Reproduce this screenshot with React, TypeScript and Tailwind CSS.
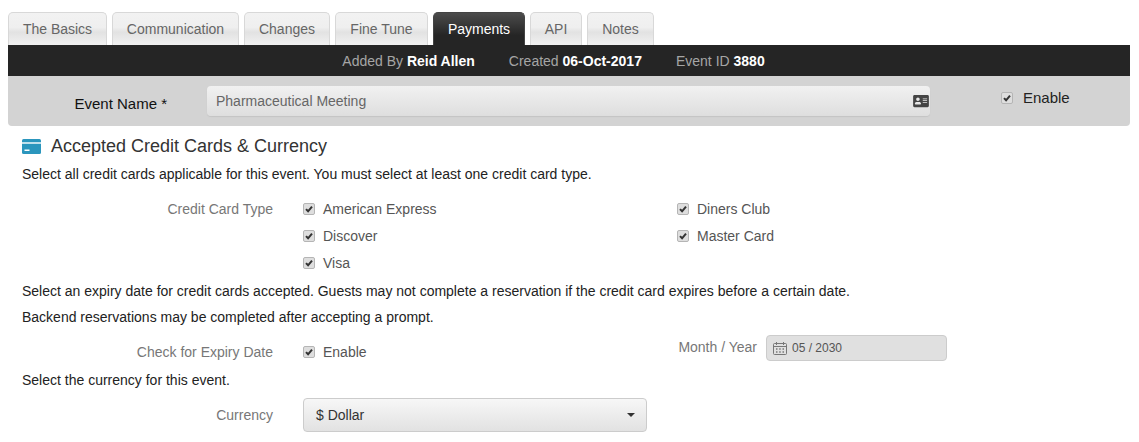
import { FaAddressCard } from "react-icons/fa";

const tabs = [
  { label: "The Basics", w: "w-[99px]" },
  { label: "Communication", w: "w-[127px]" },
  { label: "Changes", w: "w-[86px]" },
  { label: "Fine Tune", w: "w-[93px]" },
  { label: "Payments", w: "w-[92px]", active: true },
  { label: "API", w: "w-[52px]" },
  { label: "Notes", w: "w-[67px]" },
];

function Check() {
  return (
    <span className="flex h-3 w-3 shrink-0 items-center justify-center rounded-[2px] border border-[#b5b5b5] bg-[#dedede]">
      <svg viewBox="0 0 11 11" className="h-[10px] w-[10px]">
        <path d="M2.2 5.6 4.5 8 8.8 2.8" fill="none" stroke="#333" strokeWidth="2.2" />
      </svg>
    </span>
  );
}

function CheckItem({ label }: { label: string }) {
  return (
    <div className="flex items-center gap-2 text-[#555]">
      <Check />
      <span>{label}</span>
    </div>
  );
}

export default function App() {
  return (
    <div className="h-[442px] w-[1139px] overflow-hidden bg-white pl-2 pr-[9px] pt-3 font-['Liberation_Sans',Arial,sans-serif] text-sm text-[#333]">
      <div className="flex h-[33px] gap-[5px]">
        {tabs.map((t) => (
          <div
            key={t.label}
            className={
              t.active
                ? `${t.w} flex items-center justify-center rounded-t-[5px] border border-b-0 border-[#444] bg-[linear-gradient(#4c4c4c,#252525_70%)] text-white`
                : `${t.w} flex items-center justify-center rounded-t-[5px] border border-b-0 border-[#d8d8d8] bg-[linear-gradient(#f2f2f2_0%,#efefef_45%,#e2e2e2_60%,#f1f1f1_100%)] text-[#666]`
            }
          >
            {t.label}
          </div>
        ))}
      </div>

      <div className="flex h-[31px] items-center justify-center gap-[34px] bg-[#252525] pr-[31px] text-[#a5a5a5]">
        <span>
          Added By <b className="text-white">Reid Allen</b>
        </span>
        <span>
          Created <b className="text-white">06-Oct-2017</b>
        </span>
        <span>
          Event ID <b className="text-white">3880</b>
        </span>
      </div>

      <div className="flex h-[50px] rounded-b-[4px] bg-[#d3d3d3]">
        <div className="w-[159px] pt-[17px] text-right text-[15px] text-[#111]">Event Name *</div>
        <div className="ml-10 mt-[10px] flex h-[30px] w-[723px] items-center justify-between rounded-[4px] bg-[linear-gradient(#f1f1f1,#dedede)] pl-[9px] pr-[1px] text-[#666] shadow-[0_1px_1px_#c4c4c4]">
          <span>Pharmaceutical Meeting</span>
          <FaAddressCard className="h-[14px] w-4 text-[#444]" />
        </div>
        <div className="ml-[71px] flex h-[44px] items-center gap-[10px] text-[#222]">
          <span className="mt-[-1px]">
            <Check />
          </span>
          <span className="text-[15px]">Enable</span>
        </div>
      </div>

      <div className="ml-[14px] mt-[10px] flex h-5 items-center gap-[10px]">
        <svg viewBox="0 0 19 15" className="h-[15px] w-[19px]">
          <rect width="19" height="15" rx="1.5" fill="#2b96bd" />
          <rect y="3" width="19" height="2" fill="#bfe0ec" />
          <rect x="2.5" y="10.5" width="5" height="1.5" fill="#fff" />
        </svg>
        <h2 className="text-lg text-[#333]">Accepted Credit Cards &amp; Currency</h2>
      </div>

      <p className="ml-[14px] mt-2 text-[#222]">
        Select all credit cards applicable for this event. You must select at least one credit card type.
      </p>

      <div className="mt-[11px] grid grid-cols-[265px_404px_1fr] auto-rows-[27px] items-center">
        <div className="text-right text-[#777]">Credit Card Type</div>
        <div className="pl-[30px]">
          <CheckItem label="American Express" />
        </div>
        <CheckItem label="Diners Club" />
        <div />
        <div className="pl-[30px]">
          <CheckItem label="Discover" />
        </div>
        <CheckItem label="Master Card" />
        <div />
        <div className="pl-[30px]">
          <CheckItem label="Visa" />
        </div>
      </div>

      <div className="ml-[14px] mt-[2px] text-[#222]">
        <p className="leading-[26px]">
          Select an expiry date for credit cards accepted. Guests may not complete a reservation if the credit card expires before a certain date.
        </p>
        <p className="leading-[26px]">Backend reservations may be completed after accepting a prompt.</p>
      </div>

      <div className="mt-[3px] flex h-[26px]">
        <div className="w-[265px] pt-[9px] text-right text-[#777]">Check for Expiry Date</div>
        <div className="ml-[30px] w-[374px] pt-[9px]">
          <CheckItem label="Enable" />
        </div>
        <div className="ml-[-1px] w-[81px] pt-[4px] text-right text-[#777]">Month / Year</div>
        <div className="ml-[9px] mt-[2px] flex h-[26px] w-[181px] items-center gap-[4px] rounded-[4px] border border-[#ccc] bg-[#e0e0e0] pl-[5px] text-xs text-[#555]">
          <svg viewBox="0 0 16 15" className="h-[15px] w-4" fill="none" stroke="#777">
            <rect x="1.5" y="2.5" width="13" height="11" rx="1" />
            <path d="M1.5 5.5h13M4.5 1v3M11.5 1v3" />
            <path d="M4 8h1.5M7.2 8h1.5M10.5 8H12M4 11h1.5M7.2 11h1.5M10.5 11H12" strokeWidth="1.3" />
          </svg>
          <span>05 / 2030</span>
        </div>
      </div>

      <p className="ml-[14px] mt-[9px] leading-[24px] text-[#222]">Select the currency for this event.</p>

      <div className="mt-[6px] flex h-[34px] items-center">
        <div className="w-[265px] text-right text-[#777]">Currency</div>
        <div className="ml-[30px] flex h-[34px] w-[344px] items-center justify-between rounded-[4px] border border-[#ccc] bg-[linear-gradient(#f7f7f7,#e2e2e2)] pl-3 pr-[11px] text-[#333]">
          <span>$ Dollar</span>
          <svg viewBox="0 0 8 4" className="h-1 w-2">
            <path d="M0 0h8L4 4z" fill="#333" />
          </svg>
        </div>
      </div>
    </div>
  );
}
